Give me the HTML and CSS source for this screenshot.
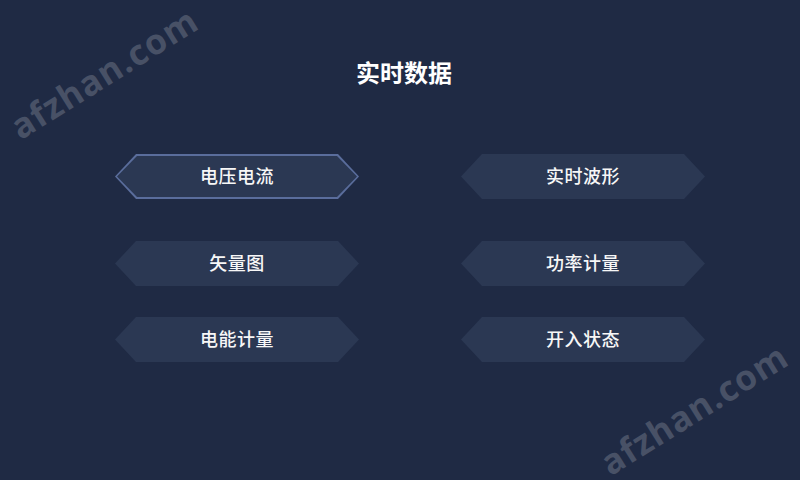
FILE: index.html
```html
<!DOCTYPE html>
<html lang="zh">
<head>
<meta charset="utf-8">
<title>实时数据</title>
<link rel="stylesheet" href="styles.css">
</head>
<body>
<div class="screen">
  <h1 class="title">实时数据</h1>
  <div class="menu">
    <div class="row row1">
      <div class="btn active"><span>电压电流</span></div>
      <div class="btn"><span>实时波形</span></div>
    </div>
    <div class="row row2">
      <div class="btn"><span>矢量图</span></div>
      <div class="btn"><span>功率计量</span></div>
    </div>
    <div class="row row3">
      <div class="btn"><span>电能计量</span></div>
      <div class="btn"><span>开入状态</span></div>
    </div>
  </div>
  <div class="wm wm1">afzhan.com</div>
  <div class="wm wm2">afzhan.com</div>
</div>
</body>
</html>
```
FILE: styles.css
```css
html, body {
  margin: 0;
  padding: 0;
}
body {
  background: #1f2a44;
  font-family: "Noto Sans CJK SC", "Noto Sans", sans-serif;
}
.screen {
  position: relative;
  width: 800px;
  height: 480px;
  overflow: hidden;
  background: #1f2a44;
}
.title {
  margin: 0;
  padding: 59px 0 0 8px;
  height: 26px;
  line-height: 26px;
  font-size: 24px;
  font-weight: 700;
  color: #ffffff;
  text-align: center;
}
.menu {
  padding: 69px 0 0 115px;
  display: flex;
  flex-direction: column;
}
.row {
  display: flex;
  gap: 102px;
}
.row1 { margin-bottom: 42px; }
.row2 { margin-bottom: 31px; }
.btn {
  position: relative;
  width: 244px;
  height: 45px;
  box-sizing: border-box;
  padding-bottom: 3px;
  display: flex;
  align-items: center;
  justify-content: center;
  background: #2b3853;
  clip-path: polygon(21px 0, 223px 0, 244px 50%, 223px 100%, 21px 100%, 0 50%);
  color: #f7f7f7;
  font-size: 18px;
  font-weight: 500;
  letter-spacing: 0.5px;
}
.btn.active {
  background: #5a6d9c;
}
.btn.active::before {
  content: "";
  position: absolute;
  inset: 2px;
  background: #2b3853;
  clip-path: polygon(20px 0, 220px 0, 240px 50%, 220px 100%, 20px 100%, 0 50%);
}
.btn span {
  position: relative;
}
.wm {
  position: absolute;
  font-family: "Open Sans", "DejaVu Sans", sans-serif;
  font-weight: 700;
  font-size: 35px;
  line-height: 40px;
  color: #485166;
  white-space: nowrap;
  transform: translate(-50%, -50%) rotate(-32deg);
  letter-spacing: 1px;
}
.wm1 { left: 104px; top: 73px; }
.wm2 { left: 694px; top: 409px; }
```
